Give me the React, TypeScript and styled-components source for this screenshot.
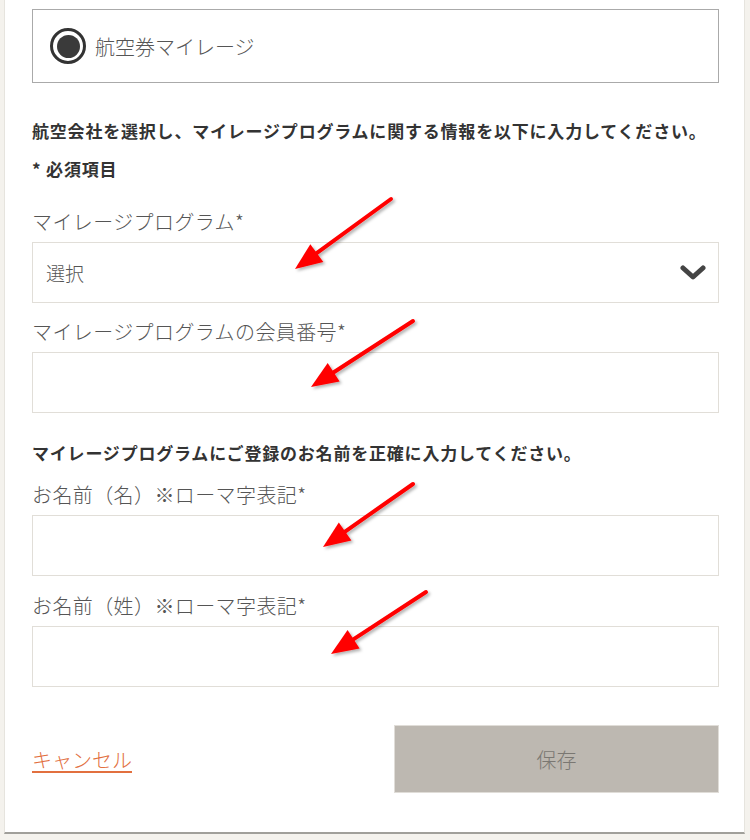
import React from 'react';
import styled, { createGlobalStyle } from 'styled-components';

const GlobalStyle = createGlobalStyle`
  html, body {
    margin: 0;
    padding: 0;
    background: #f4f2ed;
  }
  body {
    font-family: "Noto Sans CJK JP", "Noto Sans", sans-serif;
    color: #555;
  }
`;

const Page = styled.div`
  position: relative;
  width: 750px;
  height: 840px;
  overflow: hidden;
`;

const Card = styled.div`
  margin: 0 5px 0 4px;
  background: #ffffff;
  border-left: 1px solid #e6e4de;
  border-right: 1px solid #e6e4de;
  border-bottom: 2px solid #a09f9a;
  padding: 9px 25px 39px 27px;
`;

const RadioBox = styled.label`
  display: flex;
  align-items: center;
  gap: 9px;
  height: 74px;
  box-sizing: border-box;
  border: 1px solid #aaaaaa;
  padding: 0 17px;
  font-size: 20px;
  font-weight: 300;
  color: #555;
`;

const RadioMark = styled.span`
  width: 36px;
  height: 36px;
  box-sizing: border-box;
  border: 3px solid #333;
  border-radius: 50%;
  display: flex;
  align-items: center;
  justify-content: center;

  &::after {
    content: '';
    width: 23px;
    height: 23px;
    border-radius: 50%;
    background: #3a3a3a;
  }
`;

const Note = styled.p<{ $top: number }>`
  margin: ${p => p.$top}px 0 0;
  font-size: 17px;
  line-height: 26px;
  font-weight: 700;
  letter-spacing: 0.8px;
  color: #333;
`;

const Label = styled.div<{ $top?: number }>`
  margin-top: ${p => p.$top ?? 15}px;
  margin-bottom: 6px;
  font-size: 20px;
  line-height: 28px;
  font-weight: 300;
  letter-spacing: 0.4px;
  color: #555;
`;

const Field = styled.div`
  height: 61px;
  box-sizing: border-box;
  border: 1px solid #e1ded8;
  background: #fff;
  display: flex;
  align-items: center;
  justify-content: space-between;
  padding: 0 12px 0 13px;
  font-size: 19px;
  font-weight: 300;
  color: #555;
`;

const Footer = styled.div`
  margin-top: 38px;
  display: flex;
  align-items: center;
  justify-content: space-between;
`;

const CancelLink = styled.a`
  font-size: 20px;
  font-weight: 300;
  color: #e2703f;
  text-decoration: underline;
  text-underline-offset: 3px;
  cursor: pointer;
`;

const SaveButton = styled.button`
  width: 325px;
  height: 68px;
  border: 1px solid #e0ddd8;
  background: #bdb8b1;
  color: #7a7772;
  font-family: inherit;
  font-size: 20px;
  font-weight: 300;
`;

const Overlay = styled.svg`
  position: absolute;
  left: 0;
  top: 0;
  pointer-events: none;
`;

const Chevron = () => (
  <svg width="26" height="18" viewBox="0 0 26 18">
    <path d="M3 4 L13 13 L23 4" fill="none" stroke="#444" strokeWidth="5" strokeLinecap="round" strokeLinejoin="round" />
  </svg>
);

const arrows: [number, number, number, number][] = [
  [391, 199, 295, 269],
  [413, 321, 311, 387],
  [413, 484, 323, 547],
  [426, 592, 331, 654],
];

const Arrow = ({ x1, y1, x2, y2 }: { x1: number; y1: number; x2: number; y2: number }) => {
  const dx = x2 - x1;
  const dy = y2 - y1;
  const len = Math.hypot(dx, dy);
  const ux = dx / len;
  const uy = dy / len;
  const head = 27;
  const half = 11;
  const bx = x2 - ux * head;
  const by = y2 - uy * head;
  const pts = `${x2},${y2} ${bx - uy * half},${by + ux * half} ${bx + uy * half},${by - ux * half}`;
  return (
    <g filter="url(#shadow)">
      <line x1={x1} y1={y1} x2={bx + ux * 4} y2={by + uy * 4} stroke="#ff0000" strokeWidth="4" strokeLinecap="round" />
      <polygon points={pts} fill="#ff0000" />
    </g>
  );
};

export default function App() {
  return (
    <Page>
      <GlobalStyle />
      <Card>
        <RadioBox>
          <RadioMark />
          航空券マイレージ
        </RadioBox>
        <Note $top={35}>航空会社を選択し、マイレージプログラムに関する情報を以下に入力してください。</Note>
        <Note $top={12}>* 必須項目</Note>
        <Label $top={26}>マイレージプログラム*</Label>
        <Field>
          選択
          <Chevron />
        </Field>
        <Label>マイレージプログラムの会員番号*</Label>
        <Field />
        <Note $top={27}>マイレージプログラムにご登録のお名前を正確に入力してください。</Note>
        <Label $top={15}>お名前（名）※ローマ字表記*</Label>
        <Field />
        <Label $top={16}>お名前（姓）※ローマ字表記*</Label>
        <Field />
        <Footer>
          <CancelLink>キャンセル</CancelLink>
          <SaveButton>保存</SaveButton>
        </Footer>
      </Card>
      <Overlay width="750" height="840" viewBox="0 0 750 840">
        <defs>
          <filter id="shadow" x="-20%" y="-20%" width="140%" height="140%">
            <feDropShadow dx="2" dy="2" stdDeviation="1.5" floodColor="#000" floodOpacity="0.3" />
          </filter>
        </defs>
        {arrows.map(([a, b, c, d], i) => (
          <Arrow key={i} x1={a} y1={b} x2={c} y2={d} />
        ))}
      </Overlay>
    </Page>
  );
}
